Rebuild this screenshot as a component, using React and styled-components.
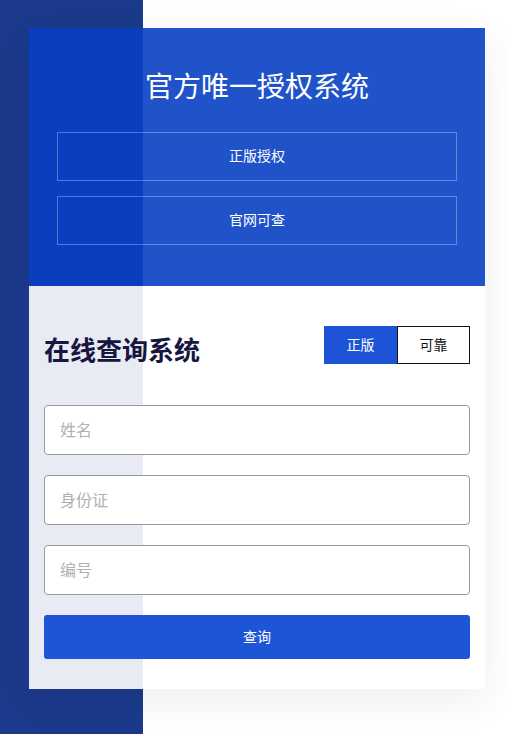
import { useState } from "react"
import styled, { createGlobalStyle } from "styled-components"

const GlobalStyle = createGlobalStyle`
html, body {
  margin: 0;
  padding: 0;
}
body {
  font-family: "Noto Sans CJK SC", "Noto Sans", "Liberation Sans", sans-serif;
}
* {
  box-sizing: border-box;
}
`

const Page = styled.div`
min-height: 734px;
padding: 28px 25px 45px 29px;
background: linear-gradient(to right, #1b3a8b 143px, #ffffff 143px);
`

const Card = styled.div`
width: 456px;
box-shadow: 0 12px 40px rgba(0, 0, 0, 0.07);
`

const Banner = styled.div`
display: flex;
flex-direction: column;
align-items: center;
padding: 38px 28px 41px;
background: rgba(8, 64, 196, 0.9);
`

const BannerTitle = styled.h1`
margin: 0 0 28px;
font-size: 28px;
line-height: 38px;
font-weight: 400;
color: #ffffff;
`

const BannerList = styled.div`
display: flex;
flex-direction: column;
gap: 15px;
width: 100%;
`

const BannerItem = styled.div`
display: flex;
justify-content: center;
align-items: center;
height: 49px;
padding-bottom: 3px;
border: 1px solid rgba(255, 255, 255, 0.3);
color: #ffffff;
font-size: 14px;
`

const Panel = styled.div`
padding: 40px 15px 30px;
background: rgba(255, 255, 255, 0.9);
`

const Header = styled.div`
display: flex;
justify-content: space-between;
align-items: flex-end;
margin-bottom: 41px;
`

const PanelTitle = styled.h2`
margin: 0;
font-size: 26px;
line-height: 30px;
font-weight: 700;
color: #16163f;
`

const Toggle = styled.div`
display: flex;
`

const ToggleButton = styled.button`
width: 73px;
height: 38px;
border: 1px solid ${(p) => (p.$active ? "#1d53d6" : "#111111")};
background: ${(p) => (p.$active ? "#1d53d6" : "#ffffff")};
color: ${(p) => (p.$active ? "#ffffff" : "#111111")};
font-family: inherit;
font-size: 14px;
padding: 0 0 2px;
cursor: pointer;
`

const Form = styled.form`
display: flex;
flex-direction: column;
gap: 20px;
`

const Field = styled.input`
width: 100%;
height: 50px;
padding: 0 15px 2px;
border: 1px solid #9a9a9a;
border-radius: 4px;
background: #ffffff;
font-family: inherit;
font-size: 16px;
color: #333333;
outline: none;
&::placeholder {
  color: #b0b0b0;
}
`

const Submit = styled.button`
height: 44px;
padding: 0 0 2px;
border: none;
border-radius: 3px;
background: #1d55d6;
color: #ffffff;
font-family: inherit;
font-size: 14px;
cursor: pointer;
`

export default function App() {
  const [mode, setMode] = useState("zb")
  return (
    <>
      <GlobalStyle />
      <Page>
        <Card>
          <Banner>
            <BannerTitle>官方唯一授权系统</BannerTitle>
            <BannerList>
              <BannerItem>正版授权</BannerItem>
              <BannerItem>官网可查</BannerItem>
            </BannerList>
          </Banner>
          <Panel>
            <Header>
              <PanelTitle>在线查询系统</PanelTitle>
              <Toggle>
                <ToggleButton $active={mode === "zb"} onClick={() => setMode("zb")}>正版</ToggleButton>
                <ToggleButton $active={mode === "kk"} onClick={() => setMode("kk")}>可靠</ToggleButton>
              </Toggle>
            </Header>
            <Form onSubmit={(e) => e.preventDefault()}>
              <Field placeholder="姓名" />
              <Field placeholder="身份证" />
              <Field placeholder="编号" />
              <Submit type="submit">查询</Submit>
            </Form>
          </Panel>
        </Card>
      </Page>
    </>
  )
}
